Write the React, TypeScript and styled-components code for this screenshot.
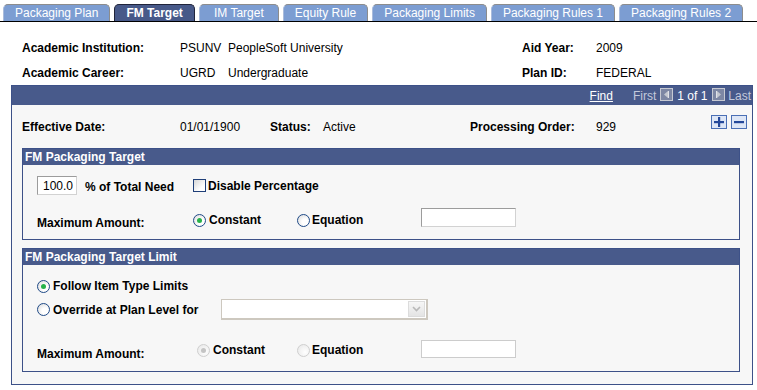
import React from 'react';
import styled, { createGlobalStyle } from 'styled-components';

const GlobalStyle = createGlobalStyle`
  html, body { margin: 0; padding: 0; background: #fff; }
  body {
    font-family: "Liberation Sans", Arial, Helvetica, sans-serif;
    font-size: 12px;
    color: #000;
  }
`;

const Page = styled.div`
  width: 757px;
  height: 390px;
  overflow: hidden;
  position: relative;
`;

const TabBar = styled.div`
  display: flex;
  gap: 4px;
  padding: 4px 0 0 3px;
  height: 17px;
  border-bottom: 1px solid #000;
`;

const Tab = styled.div<{ $active?: boolean }>`
  box-sizing: border-box;
  height: 17px;
  min-width: 80px;
  padding: 0 11px;
  display: flex;
  align-items: center;
  justify-content: center;
  border: 1px solid ${p => (p.$active ? '#20243a' : '#8c8c8c')};
  border-bottom: none;
  border-left-color: ${p => (p.$active ? '#20243a' : '#a9bbdc')};
  border-radius: 5px 5px 0 0;
  background: ${p => (p.$active ? '#475989' : '#7c9dd2')};
  color: #fff;
  font-size: 12px;
  font-weight: ${p => (p.$active ? 700 : 400)};
  white-space: nowrap;
`;

const HeaderGrid = styled.div`
  display: grid;
  grid-template-columns: 158px 48px 294px 74px 1fr;
  grid-auto-rows: 25px;
  align-items: center;
  margin-top: 13px;
  padding-left: 22px;
`;

const Label = styled.span<{ $pt?: number }>`
  font-weight: 700;
  white-space: nowrap;
  padding-top: ${p => p.$pt ?? 0}px;
`;

const Value = styled.span`
  white-space: nowrap;
`;

const MainBox = styled.div`
  box-sizing: border-box;
  margin-left: 11px;
  width: 742px;
  height: 300px;
  border: 1px solid #3d5188;
  background: #f7f7f7;
`;

const NavBar = styled.div`
  height: 19px;
  background: #485a8b;
  display: flex;
  align-items: center;
  justify-content: flex-end;
  padding-right: 1px;
`;

const NavText = styled.span<{ $mr?: number; $muted?: boolean; $link?: boolean }>`
  color: ${p => (p.$muted ? '#c3c9dc' : '#ffffff')};
  text-decoration: ${p => (p.$link ? 'underline' : 'none')};
  margin-right: ${p => p.$mr ?? 0}px;
  white-space: nowrap;
`;

const NavButton = styled.span<{ $mr?: number }>`
  display: inline-flex;
  width: 13px;
  height: 13px;
  margin-right: ${p => p.$mr ?? 0}px;
  margin-top: -2px;
`;

const EffRow = styled.div`
  display: grid;
  grid-template-columns: 158px 90px 53px 147px 126px 1fr auto;
  height: 43px;
  align-items: center;
  padding: 0 5px 0 10px;
`;

const ButtonPair = styled.div`
  align-self: start;
  margin-top: 10px;
  display: flex;
  gap: 4px;
`;

const RowButton = styled.span`
  box-sizing: border-box;
  width: 16px;
  height: 14px;
  border: 1px solid #4a6fb5;
  background: #dde6f6;
  display: flex;
  align-items: center;
  justify-content: center;
`;

const Group = styled.div<{ $mt?: number }>`
  margin: ${p => p.$mt ?? 0}px 12px 0 10px;
  border: 1px solid #3d5188;
`;

const GroupHeader = styled.div`
  height: 16px;
  background: #485a8b;
  color: #fff;
  font-weight: 700;
  padding-left: 2px;
  display: flex;
  align-items: center;
  white-space: nowrap;
`;

const GroupBody = styled.div<{ $h: number; $pt: number }>`
  box-sizing: border-box;
  height: ${p => p.$h}px;
  padding: ${p => p.$pt}px 0 0 14px;
  background: #f7f7f7;
`;

const FormRow = styled.div<{ $h: number; $mt?: number }>`
  display: flex;
  align-items: center;
  height: ${p => p.$h}px;
  margin-top: ${p => p.$mt ?? 0}px;
`;

const Cell = styled.div<{ $w?: number; $gap?: number; $start?: boolean }>`
  display: flex;
  align-items: center;
  gap: ${p => p.$gap ?? 0}px;
  width: ${p => (p.$w ? `${p.$w}px` : 'auto')};
  flex: none;
  align-self: ${p => (p.$start ? 'flex-start' : 'center')};
`;

const TextInput = styled.div<{ $w: number; $h: number; $disabled?: boolean }>`
  box-sizing: border-box;
  width: ${p => p.$w}px;
  height: ${p => p.$h}px;
  background: #fff;
  border: 1px solid;
  border-color: ${p =>
    p.$disabled ? '#cccccc' : '#9c9c9c #d2d2d2 #d2d2d2 #9c9c9c'};
  display: flex;
  align-items: center;
  justify-content: flex-end;
  padding-right: 3px;
`;

const Radio = styled.span<{ $checked?: boolean; $disabled?: boolean }>`
  box-sizing: border-box;
  width: 13px;
  height: 13px;
  border-radius: 50%;
  border: 1px solid ${p => (p.$disabled ? '#cfcfcf' : '#1f4a87')};
  background: ${p =>
    p.$disabled
      ? 'radial-gradient(circle at 65% 65%, #ffffff, #e6e6e6)'
      : 'radial-gradient(circle at 65% 65%, #ffffff 30%, #d6d6d6)'};
  display: inline-flex;
  align-items: center;
  justify-content: center;
  flex: none;
  &::after {
    content: '';
    display: ${p => (p.$checked ? 'block' : 'none')};
    width: 5px;
    height: 5px;
    border-radius: 50%;
    background: ${p => (p.$disabled ? '#c4c4c4' : '#27b24a')};
  }
`;

const Checkbox = styled.span`
  box-sizing: border-box;
  width: 13px;
  height: 13px;
  border: 1px solid #1f3f78;
  background: linear-gradient(135deg, #d6d6d6, #ffffff 70%);
  flex: none;
`;

const Select = styled.div`
  box-sizing: border-box;
  width: 207px;
  height: 21px;
  border: 1px solid #cdc8bf;
  border-right-width: 2px;
  border-bottom-width: 2px;
  background: #fff;
  display: flex;
  justify-content: flex-end;
  align-items: stretch;
  padding: 1px;
`;

const SelectButton = styled.span`
  box-sizing: border-box;
  width: 17px;
  border: 1px solid #dcdcdc;
  background: linear-gradient(#f6f6f6, #e4e4e4);
  display: flex;
  align-items: center;
  justify-content: center;
`;

const tabs = [
  'Packaging Plan',
  'FM Target',
  'IM Target',
  'Equity Rule',
  'Packaging Limits',
  'Packaging Rules 1',
  'Packaging Rules 2',
];

const NavArrow: React.FC<{ dir: 'left' | 'right' }> = ({ dir }) => (
  <svg width="13" height="13" viewBox="0 0 13 13">
    <rect x="0.5" y="0.5" width="12" height="12" fill="#7d87a4" stroke="#c6c9d2" />
    {dir === 'left' ? (
      <>
        <polygon points="8,3 4,6.5 8,10" fill="#c3c7d0" />
        <rect x="8" y="3" width="1" height="7" fill="#e0e2e8" />
      </>
    ) : (
      <>
        <polygon points="5,3 9,6.5 5,10" fill="#c3c7d0" />
        <rect x="4" y="3" width="1" height="7" fill="#e0e2e8" />
      </>
    )}
  </svg>
);

const PlusIcon = () => (
  <svg width="10" height="10" viewBox="0 0 10 10">
    <rect x="4" y="0" width="2.2" height="10" fill="#24489a" />
    <rect x="0" y="4" width="10" height="2.2" fill="#24489a" />
  </svg>
);

const MinusIcon = () => (
  <svg width="10" height="10" viewBox="0 0 10 10">
    <rect x="0" y="4" width="10" height="2.2" fill="#24489a" />
  </svg>
);

const Chevron = () => (
  <svg width="9" height="6" viewBox="0 0 9 6">
    <polyline points="1,1 4.5,4.5 8,1" fill="none" stroke="#b8b8b8" strokeWidth="1.6" />
  </svg>
);

export default function App() {
  return (
    <Page>
      <GlobalStyle />
      <TabBar>
        {tabs.map(t => (
          <Tab key={t} $active={t === 'FM Target'}>
            {t}
          </Tab>
        ))}
      </TabBar>

      <HeaderGrid>
        <Label>Academic Institution:</Label>
        <Value>PSUNV</Value>
        <Value>PeopleSoft University</Value>
        <Label>Aid Year:</Label>
        <Value>2009</Value>
        <Label>Academic Career:</Label>
        <Value>UGRD</Value>
        <Value>Undergraduate</Value>
        <Label>Plan ID:</Label>
        <Value>FEDERAL</Value>
      </HeaderGrid>

      <MainBox>
        <NavBar>
          <NavText $link $mr={20}>Find</NavText>
          <NavText $muted $mr={4}>First</NavText>
          <NavButton $mr={4}>
            <NavArrow dir="left" />
          </NavButton>
          <NavText $mr={5}>1 of 1</NavText>
          <NavButton $mr={3}>
            <NavArrow dir="right" />
          </NavButton>
          <NavText $muted>Last</NavText>
        </NavBar>

        <EffRow>
          <Label>Effective Date:</Label>
          <Value>01/01/1900</Value>
          <Label>Status:</Label>
          <Value>Active</Value>
          <Label>Processing Order:</Label>
          <Value>929</Value>
          <ButtonPair>
            <RowButton>
              <PlusIcon />
            </RowButton>
            <RowButton>
              <MinusIcon />
            </RowButton>
          </ButtonPair>
        </EffRow>

        <Group>
          <GroupHeader>FM Packaging Target</GroupHeader>
          <GroupBody $h={74} $pt={11}>
            <FormRow $h={19}>
              <Cell $w={48}>
                <TextInput $w={40} $h={19}>100.0</TextInput>
              </Cell>
              <Cell $w={108}>
                <Label $pt={3}>% of Total Need</Label>
              </Cell>
              <Cell $gap={2}>
                <Checkbox />
                <Label>Disable Percentage</Label>
              </Cell>
            </FormRow>
            <FormRow $h={24} $mt={13}>
              <Cell $w={156}>
                <Label $pt={6}>Maximum Amount:</Label>
              </Cell>
              <Cell $w={104} $gap={3}>
                <Radio $checked />
                <Label>Constant</Label>
              </Cell>
              <Cell $w={124} $gap={2}>
                <Radio />
                <Label>Equation</Label>
              </Cell>
              <Cell $start>
                <TextInput $w={95} $h={19} />
              </Cell>
            </FormRow>
          </GroupBody>
        </Group>

        <Group $mt={8}>
          <GroupHeader>FM Packaging Target Limit</GroupHeader>
          <GroupBody $h={106} $pt={14}>
            <FormRow $h={14}>
              <Cell $gap={3}>
                <Radio $checked />
                <Label>Follow Item Type Limits</Label>
              </Cell>
            </FormRow>
            <FormRow $h={21} $mt={6}>
              <Cell $w={184} $gap={3}>
                <Radio />
                <Label>Override at Plan Level for</Label>
              </Cell>
              <Select>
                <SelectButton>
                  <Chevron />
                </SelectButton>
              </Select>
            </FormRow>
            <FormRow $h={20} $mt={20}>
              <Cell $w={160}>
                <Label $pt={8}>Maximum Amount:</Label>
              </Cell>
              <Cell $w={100} $gap={3}>
                <Radio $checked $disabled />
                <Label>Constant</Label>
              </Cell>
              <Cell $w={124} $gap={2}>
                <Radio $disabled />
                <Label>Equation</Label>
              </Cell>
              <Cell $start>
                <TextInput $w={95} $h={18} $disabled />
              </Cell>
            </FormRow>
          </GroupBody>
        </Group>
      </MainBox>
    </Page>
  );
}
